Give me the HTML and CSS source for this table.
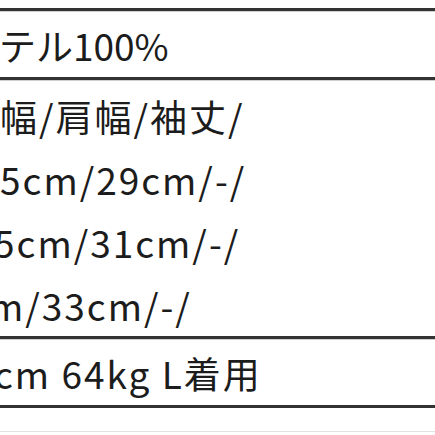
FILE: index.html
```html
<!DOCTYPE html>
<html lang="ja">
<head>
<meta charset="utf-8">
<link rel="stylesheet" href="styles.css">
</head>
<body>
<div class="sheet">
  <div class="row row-single row-first">
    <p class="line tight">テル100%</p>
  </div>
  <div class="row row-multi">
    <p class="line">幅/肩幅/袖丈/</p>
    <p class="line">5cm/29cm/-/</p>
    <p class="line l3">5cm/31cm/-/</p>
    <p class="line l4">m/33cm/-/</p>
  </div>
  <div class="row row-single row-last">
    <p class="line l5">cm 64kg L着用</p>
  </div>
  <div class="faint"></div>
</div>
</body>
</html>
```
FILE: styles.css
```css
html, body {
  margin: 0;
  padding: 0;
  background: #ffffff;
}
body {
  width: 435px;
  height: 435px;
  overflow: hidden;
  font-family: "Noto Sans CJK JP", "Noto Sans", sans-serif;
  color: #1c1c1c;
}
.sheet {
  padding-top: 8px;
}
.row {
  border-top: 3px solid #333333;
  box-shadow: inset 0 1px 0 #cfcfcf;
}
.row-last {
  border-bottom: 3px solid #333333;
}
.row-single {
  height: 63px;
  padding-top: 3px;
  display: flex;
  align-items: center;
}
.row-multi {
  height: 251px;
  padding-top: 5px;
}
.line {
  margin: 0;
  font-size: 37px;
  line-height: 63px;
  letter-spacing: 2px;
  white-space: nowrap;
}
.tight {
  letter-spacing: 0;
  text-indent: -1px;
}
.l3 { text-indent: -6px; }
.l4 { text-indent: -11px; }
.l5 { text-indent: -6px; }
.faint {
  height: 23px;
  border-bottom: 1px solid #e2e2e2;
}
```
